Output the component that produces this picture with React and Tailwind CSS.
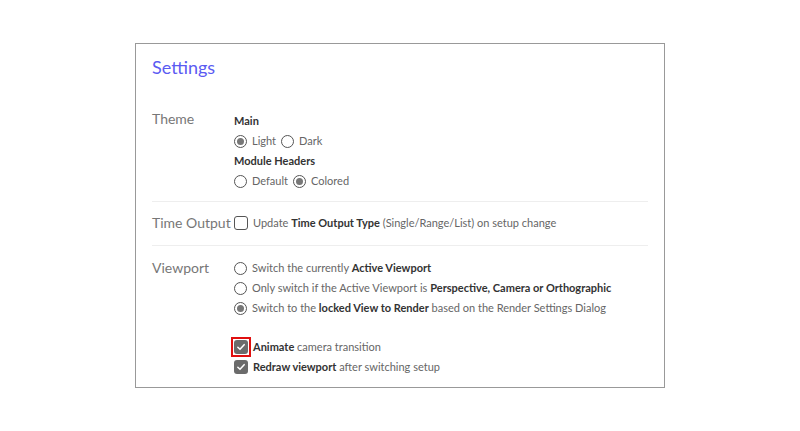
const Radio = ({ checked }) => (
  <span className="inline-flex items-center justify-center w-[13px] h-[13px] rounded-full border-[1.5px] border-[#555] shrink-0">
    {checked && <span className="w-[7px] h-[7px] rounded-full bg-[#777]" />}
  </span>
)

const Checkbox = ({ checked }) => (
  <span
    className={`inline-flex items-center justify-center w-[14px] h-[14px] rounded-[3px] shrink-0 ${
      checked ? 'bg-[#6b6b6b]' : 'border-[1.5px] border-[#555]'
    }`}
  >
    {checked && (
      <svg viewBox="0 0 12 12" className="w-[10px] h-[10px]" fill="none">
        <path d="M2.2 6.3L4.8 8.8L9.8 3.2" stroke="white" strokeWidth="1.8" strokeLinecap="round" strokeLinejoin="round" />
      </svg>
    )}
  </span>
)

const Option = ({ children }) => (
  <div className="flex items-center gap-[5px] h-[20px] text-[11px] text-[#666]">{children}</div>
)

const B = ({ children }) => <span className="font-bold text-[#333]">{children}</span>

const Row = ({ label, children, last }) => (
  <div className={`flex ${last ? '' : 'border-b border-[#eee]'}`}>
    <div className="w-[82px] shrink-0 text-[14px] text-[#777] leading-[20px]">{label}</div>
    <div className="flex-1">{children}</div>
  </div>
)

export default function App() {
  return (
    <div className="w-full h-[431px] bg-white pt-[43px]" style={{ fontFamily: 'Lato, "Noto Sans", sans-serif' }}>
      <div className="mx-auto w-[530px] h-[345px] border border-[#999] px-[16px]">
        <h1 className="pt-[10px] text-[18px] leading-[26px] text-[#5b5bf2]">Settings</h1>

        <div className="mt-[29px]">
          <Row label="Theme">
            <div className="pt-[2px] pb-[10px]">
              <div className="h-[20px] flex items-center text-[11px] font-bold text-[#333]">Main</div>
              <Option>
                <Radio checked /> <span>Light</span> <Radio /> <span>Dark</span>
              </Option>
              <div className="h-[20px] flex items-center text-[11px] font-bold text-[#333]">Module Headers</div>
              <Option>
                <Radio /> <span>Default</span> <Radio checked /> <span>Colored</span>
              </Option>
            </div>
          </Row>

          <div className="h-[11px]" />
          <Row label="Time Output">
            <div className="pb-[12px]">
              <Option>
                <Checkbox />
                <span>
                  Update <B>Time Output Type</B> (Single/Range/List) on setup change
                </span>
              </Option>
            </div>
          </Row>

          <div className="h-[12px]" />
          <Row label="Viewport" last>
            <Option>
              <Radio />
              <span>
                Switch the currently <B>Active Viewport</B>
              </span>
            </Option>
            <Option>
              <Radio />
              <span>
                Only switch if the Active Viewport is <B>Perspective, Camera or Orthographic</B>
              </span>
            </Option>
            <Option>
              <Radio checked />
              <span>
                Switch to the <B>locked View to Render</B> based on the Render Settings Dialog
              </span>
            </Option>
            <div className="h-[19px]" />
            <Option>
              <span className="relative inline-flex">
                <Checkbox checked />
                <span className="absolute -left-[3px] -top-[3px] w-[20px] h-[20px] border-2 border-[#e01010]" />
              </span>
              <span>
                <B>Animate</B> camera transition
              </span>
            </Option>
            <Option>
              <Checkbox checked />
              <span>
                <B>Redraw viewport</B> after switching setup
              </span>
            </Option>
          </Row>
        </div>
      </div>
    </div>
  )
}
